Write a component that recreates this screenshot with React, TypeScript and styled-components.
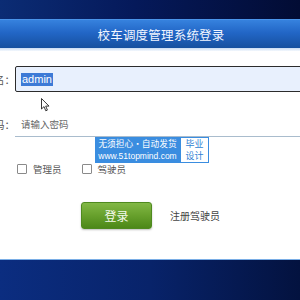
import React from 'react'
import styled, { createGlobalStyle } from 'styled-components'

const GlobalStyle = createGlobalStyle`
  html, body {
    margin: 0;
    padding: 0;
    background: #fff;
    overflow: hidden;
  }
  body {
    font-family: "Noto Sans CJK SC", "Liberation Sans", sans-serif;
  }
`

const App = () => {
  return (
    <>
      <GlobalStyle />
      <Page>
        <TopBand />
        <TitleBar>校车调度管理系统登录</TitleBar>
        <TitleGlow />
        <Form>
          <Row>
            <Label>用户名：</Label>
            <Field>
              <Selected>admin</Selected>
            </Field>
          </Row>
          <Row $gap={20}>
            <Label>密码：</Label>
            <LineField>请输入密码</LineField>
          </Row>
          <Roles>
            <Role>
              <Box />
              管理员
            </Role>
            <Role>
              <Box />
              驾驶员
            </Role>
          </Roles>
          <Actions>
            <LoginButton>登录</LoginButton>
            <RegisterLink>注册驾驶员</RegisterLink>
          </Actions>
          <Cursor width="9" height="14" viewBox="0 0 9 14">
            <path d="M0.5 0.5 L0.5 11 L3 8.6 L4.8 12.8 L6.4 12.1 L4.7 8.1 L8 8.1 Z" fill="#fff" stroke="#222" strokeWidth="0.9" />
          </Cursor>
          <Promo>
            <PromoText>
              <span>无须担心·自动发货</span>
              <span>www.51topmind.com</span>
            </PromoText>
            <PromoTag>
              <span>毕业</span>
              <span>设计</span>
            </PromoTag>
          </Promo>
        </Form>
        <Footer />
      </Page>
    </>
  )
}

export default App

const Page = styled.div`
    width: 300px;
    height: 300px;
    display: flex;
    flex-direction: column;
    overflow: hidden;
`
const TopBand = styled.div`
    height: 19px;
    background: linear-gradient(90deg, #0b2c74 0%, #05195a 45%, #020c34 100%);
`
const TitleBar = styled.div`
    height: 29px;
    display: flex;
    align-items: center;
    justify-content: center;
    padding-left: 22px;
    box-sizing: border-box;
    border-top: 1px solid #4a94ea;
    background: linear-gradient(180deg, #3682de 0%, #2266c6 45%, #16509f 100%);
    color: #f2f6ff;
    font-size: 12.5px;
    letter-spacing: 0.2px;
`
const TitleGlow = styled.div`
    height: 3px;
    background: linear-gradient(180deg, #c9dcf3, #f4f8fd);
`
const Form = styled.div`
    position: relative;
    display: flex;
    flex-direction: column;
    padding-top: 15px;
`
const Row = styled.div<{ $gap?: number }>`
    display: flex;
    align-items: center;
    margin-top: ${p => p.$gap ?? 0}px;
    margin-left: -38px;
`
const Label = styled.div`
    width: 53px;
    flex-shrink: 0;
    text-align: right;
    font-size: 10.5px;
    color: #555;
`
const Field = styled.div`
    width: 330px;
    flex-shrink: 0;
    height: 26px;
    box-sizing: border-box;
    border: 1px solid #2c2c2c;
    border-radius: 2px;
    background: #e8f0fd;
    display: flex;
    align-items: center;
    padding-left: 5px;
`
const Selected = styled.span`
    background: #3d7ad6;
    color: #fff;
    font-family: "Liberation Sans", Arial, sans-serif;
    font-size: 11px;
    line-height: 13px;
    padding: 0 1px;
`
const LineField = styled.div`
    width: 330px;
    flex-shrink: 0;
    height: 25px;
    box-sizing: border-box;
    border-bottom: 1px solid #a9bccd;
    display: flex;
    align-items: center;
    padding-left: 6px;
    font-size: 9.5px;
    color: #666;
`
const Roles = styled.div`
    display: flex;
    align-items: center;
    gap: 20px;
    margin-top: 26px;
    padding-left: 17px;
    height: 12px;
`
const Role = styled.label`
    display: flex;
    align-items: center;
    gap: 6px;
    font-size: 9.5px;
    color: #555;
`
const Box = styled.span`
    width: 8px;
    height: 8px;
    border: 1px solid #8a8a8a;
    border-radius: 1px;
    background: #fff;
`
const Actions = styled.div`
    display: flex;
    align-items: center;
    margin-top: 27px;
    padding-left: 81px;
    gap: 18px;
`
const LoginButton = styled.button`
    width: 71px;
    height: 27px;
    border: 1px solid #4f8a1f;
    border-radius: 3px;
    background: linear-gradient(180deg, #82b845 0%, #67a02c 50%, #4c8818 100%);
    box-shadow: 0 1px 2px rgba(0, 0, 0, 0.25);
    color: #f4f9ec;
    font-family: "Noto Sans CJK SC", sans-serif;
    font-size: 12px;
    padding: 0;
`
const RegisterLink = styled.span`
    font-size: 10px;
    color: #444;
`
const Cursor = styled.svg`
    position: absolute;
    left: 41px;
    top: 47px;
`
const Promo = styled.div`
    position: absolute;
    left: 95px;
    top: 86px;
    height: 26px;
    display: flex;
`
const PromoText = styled.div`
    width: 85px;
    background: #3a8de0;
    color: #fff;
    display: flex;
    flex-direction: column;
    align-items: center;
    justify-content: center;
    font-size: 8.7px;
    line-height: 12px;
    white-space: nowrap;
    overflow: hidden;
    span:last-child {
        font-family: "Liberation Sans", Arial, sans-serif;
        font-size: 8.5px;
    }
`
const PromoTag = styled.div`
    width: 29px;
    box-sizing: border-box;
    border: 1px solid #3a8de0;
    background: #fff;
    color: #2f7fd4;
    display: flex;
    flex-direction: column;
    align-items: center;
    justify-content: center;
    font-size: 9px;
    line-height: 12px;
`
const Footer = styled.div`
    flex: 1;
    margin-top: 30px;
    border-top: 1px solid #7aaee6;
    background: linear-gradient(90deg, #0b2d80 0%, #08236a 50%, #03123f 100%);
`
